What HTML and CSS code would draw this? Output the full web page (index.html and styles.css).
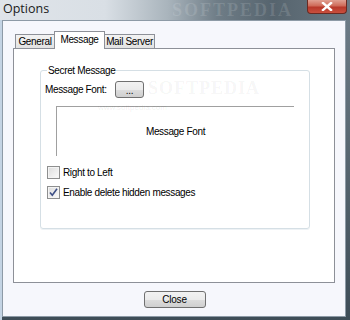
FILE: index.html
```html
<!DOCTYPE html>
<html>
<head>
<meta charset="utf-8">
<link rel="stylesheet" href="styles.css">
</head>
<body>
<div class="window">
  <div class="titlebar">
    <span class="title">Options</span>
    <span class="wm-title">SOFTPEDIA</span>
    <div class="close-x">
      <svg width="12" height="9" viewBox="0 0 12 9"><path d="M2 1 L10 8 M10 1 L2 8" stroke="#fff" stroke-width="2.4" stroke-linecap="square"/></svg>
    </div>
  </div>
  <div class="frame-body">
    <div class="client">
      <div class="tabs">
        <div class="tab tab-general">General</div>
        <div class="tab tab-message active">Message</div>
        <div class="tab tab-mail">Mail Server</div>
      </div>
      <div class="panel">
        <fieldset class="group">
          <legend>Secret Message</legend>
          <div class="group-body">
            <div class="font-row">
              <span class="label">Message Font:</span>
              <button class="btn small">...</button>
            </div>
            <div class="preview">Message Font</div>
            <div class="check-row">
              <span class="checkbox"></span>
              <span>Right to Left</span>
            </div>
            <div class="check-row">
              <span class="checkbox checked">
                <svg width="11" height="11" viewBox="0 0 11 11"><path d="M2 5.5 L4.3 8.3 L9 1.8" fill="none" stroke="#3d4f86" stroke-width="1.6"/></svg>
              </span>
              <span>Enable delete hidden messages</span>
            </div>
          </div>
        </fieldset>
        <span class="wm-big">SOFTPEDIA</span>
        <span class="wm-small">www.softpedia.com</span>
      </div>
      <div class="footer">
        <button class="btn close-btn">Close</button>
      </div>
    </div>
  </div>
</div>
</body>
</html>
```

FILE: styles.css
```css
html, body {
  margin: 0;
  padding: 0;
}
body {
  width: 350px;
  height: 320px;
  overflow: hidden;
  font-family: "Liberation Sans", Arial, sans-serif;
  font-size: 10px;
  letter-spacing: -0.35px;
  color: #000;
  background: linear-gradient(to bottom, #6f7e89, #3e4d57);
}
.window {
  display: flex;
  flex-direction: column;
  height: 320px;
}
.titlebar {
  height: 20px;
  display: flex;
  align-items: flex-start;
  padding-left: 3px;
  position: relative;
  background: linear-gradient(to right, #dfe4e9 0%, #d9dfe5 30%, #a9b4bc 48%, #6f7d87 62%, #56646e 78%, #6a7882 100%);
}
.title {
  font-family: "Open Sans", "Liberation Sans", sans-serif;
  font-size: 12.5px;
  letter-spacing: 0;
  line-height: 18px;
  color: #1a1a1a;
}
.wm-title {
  position: absolute;
  left: 172px;
  top: 0;
  font-family: "Liberation Serif", serif;
  font-size: 18px;
  line-height: 20px;
  font-weight: bold;
  letter-spacing: 2px;
  color: rgba(255,255,255,0.12);
}
.close-x {
  margin-left: auto;
  margin-right: 3px;
  width: 40px;
  height: 14px;
  box-sizing: border-box;
  border: 1px solid #6b2a22;
  border-top: none;
  border-radius: 0 0 4px 4px;
  background: linear-gradient(to bottom, #e0a092 0%, #cf6a58 45%, #b8382a 55%, #c9503e 100%);
  display: flex;
  align-items: center;
  justify-content: center;
  position: relative;
  z-index: 1;
}
.close-x svg { display: block; margin-top: -1px; }
.frame-body {
  flex: 1;
  display: flex;
  padding: 0 4px 3px 2px;
  background: linear-gradient(to right, #c3d3e3 0, #c3d3e3 2px, transparent 2px);
}
.client {
  flex: 1;
  display: flex;
  flex-direction: column;
  border: 1px solid #8d9aa6;
  background: #f6f7fc;
}
.tabs {
  display: flex;
  align-items: flex-end;
  height: 17px;
  margin: 10px 10px 0 12px;
  position: relative;
  z-index: 1;
}
.tab {
  box-sizing: border-box;
  height: 14px;
  border: 1px solid #8d9098;
  border-bottom: none;
  background: linear-gradient(to bottom, #f3f3f3, #e2e2e2);
  text-align: center;
  line-height: 13px;
  white-space: nowrap;
}
.tab-general { width: 40px; }
.tab-message { width: 51px; }
.tab-mail { width: 51px; }
.tab.active {
  height: 18px;
  margin-bottom: -1px;
  background: #fff;
  line-height: 15px;
  margin-left: -1px;
  margin-right: -1px;
}
.panel {
  flex: 1;
  margin: 0 10px;
  border: 1px solid #8d9098;
  background: #fff;
  position: relative;
  display: flex;
  flex-direction: column;
}
.group {
  margin: 15px 24px 0 26px;
  padding: 0 0 29px 0;
  border: 1px solid #d5dfe5;
  border-radius: 3px;
  box-shadow: 0 1px 0 #eef2f5;
}
.group legend {
  margin-left: 6px;
  padding: 0 1px;
  line-height: 13px;
}
.group-body {
  display: flex;
  flex-direction: column;
  padding: 0 0 0 4px;
}
.font-row {
  display: flex;
  align-items: center;
  margin-top: 4px;
  height: 17px;
}
.label {
  width: 70px;
}
.btn {
  box-sizing: border-box;
  border: 1px solid #707070;
  border-radius: 3px;
  background: linear-gradient(to bottom, #f2f2f2 0%, #ebebeb 50%, #dddddd 51%, #cfcfcf 100%);
  font-family: "Liberation Sans", Arial, sans-serif;
  font-size: 10px;
  letter-spacing: -0.2px;
  color: #000;
  padding: 0;
  margin: 0;
}
.btn.small {
  width: 29px;
  height: 17px;
  line-height: 14px;
  padding-top: 2px;
}
.preview {
  margin: 8px 0 0 11px;
  width: 238px;
  height: 50px;
  box-sizing: border-box;
  border-top: 1px solid #a0a0a0;
  border-left: 1px solid #a0a0a0;
  display: flex;
  align-items: center;
  justify-content: center;
}
.check-row {
  display: flex;
  align-items: center;
  height: 13px;
  margin-left: 2px;
  margin-top: 7px;
}
.preview + .check-row { margin-top: 10px; }
.checkbox {
  box-sizing: border-box;
  width: 13px;
  height: 13px;
  border: 1px solid #8e8f8f;
  background: linear-gradient(135deg, #dcdcdc, #fbfbfb);
  box-shadow: inset 0 0 0 1px #f4f4f4;
  margin-right: 3px;
  display: flex;
  align-items: center;
  justify-content: center;
}
.checkbox svg { display: block; }
.wm-big {
  position: absolute;
  left: 134px;
  top: 29px;
  font-family: "Liberation Serif", serif;
  font-size: 18px;
  font-weight: bold;
  letter-spacing: 1px;
  color: rgba(0,0,0,0.05);
}
.wm-small {
  position: absolute;
  left: 84px;
  top: 54px;
  font-size: 8px;
  letter-spacing: 0;
  color: rgba(0,0,0,0.08);
}
.footer {
  display: flex;
  justify-content: center;
  padding: 8px 0 8px 0;
}
.close-btn {
  width: 62px;
  height: 17px;
  line-height: 15px;
  margin-left: 1px;
}
```
